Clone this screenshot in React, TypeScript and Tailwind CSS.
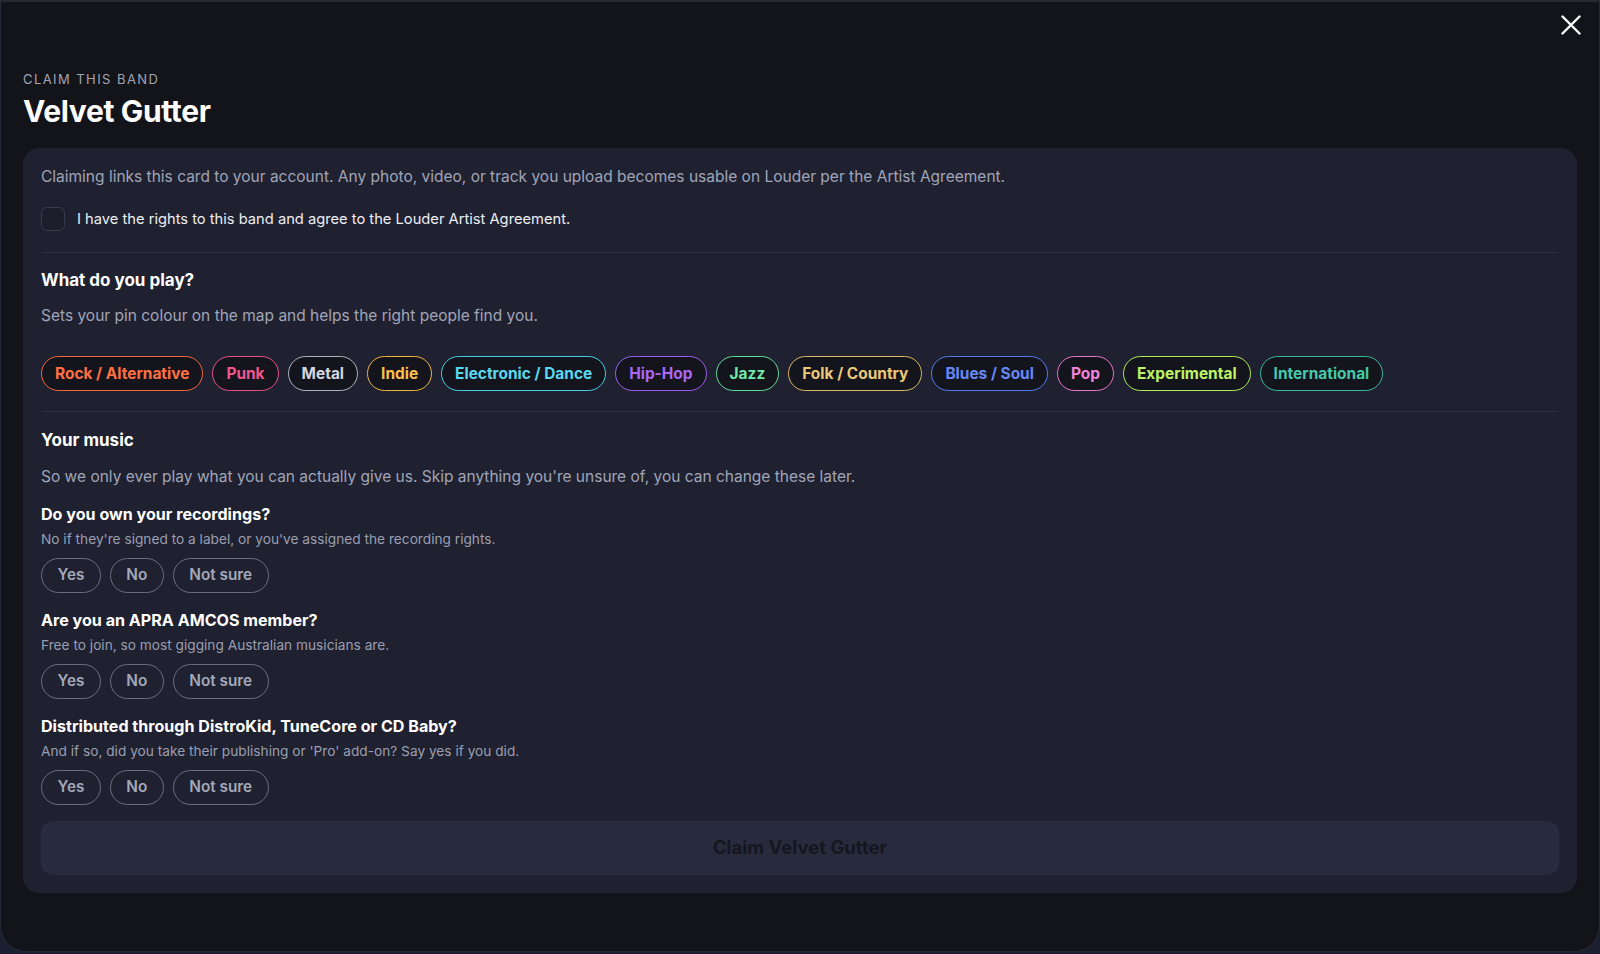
import { useState } from "react";

type Genre = { label: string; color: string };

const GENRES: Genre[] = [
  { label: "Rock / Alternative", color: "border-[#f2683c] text-[#ff6f40]" },
  { label: "Punk", color: "border-[#e9508a] text-[#f3558f]" },
  { label: "Metal", color: "border-[#aeb2bf] text-[#d4d7e0]" },
  { label: "Indie", color: "border-[#f0b443] text-[#fbbf4a]" },
  { label: "Electronic / Dance", color: "border-[#48cde6] text-[#5ad8ef]" },
  { label: "Hip-Hop", color: "border-[#9d5cf0] text-[#ab68f7]" },
  { label: "Jazz", color: "border-[#63dc98] text-[#72e8a6]" },
  { label: "Folk / Country", color: "border-[#dcb766] text-[#ebc877]" },
  { label: "Blues / Soul", color: "border-[#557cf0] text-[#6688f6]" },
  { label: "Pop", color: "border-[#e775cc] text-[#f283d8]" },
  { label: "Experimental", color: "border-[#aeeb57] text-[#bdf566]" },
  { label: "International", color: "border-[#37b99c] text-[#45c9aa]" },
];

const QUESTIONS = [
  {
    title: "Do you own your recordings?",
    hint: "No if they're signed to a label, or you've assigned the recording rights.",
  },
  {
    title: "Are you an APRA AMCOS member?",
    hint: "Free to join, so most gigging Australian musicians are.",
  },
  {
    title: "Distributed through DistroKid, TuneCore or CD Baby?",
    hint: "And if so, did you take their publishing or 'Pro' add-on? Say yes if you did.",
  },
];

function AnswerButtons() {
  return (
    <div className="mt-[10px] flex gap-[9px]">
      {["Yes", "No", "Not sure"].map((a) => (
        <button
          key={a}
          type="button"
          className="h-[35px] rounded-full border-[1.5px] border-[#696d80] px-[15.5px] text-[15.3px] font-semibold text-[#a4a8b9]"
        >
          {a}
        </button>
      ))}
    </div>
  );
}

export default function App() {
  const [agreed, setAgreed] = useState(false);

  return (
    <div
      className="h-[954px] w-full overflow-hidden bg-[#1a2030]"
      style={{ fontFamily: "Inter, 'Noto Sans', sans-serif" }}
    >
      <div className="relative h-[952px] rounded-b-[26px] border border-t-[2px] border-[#262833] bg-[#131419] px-[22px] pt-[68px]">
        {/* close */}
        <button type="button" aria-label="Close" className="absolute right-[18px] top-[13px] p-0 text-white">
          <svg width="20" height="20" viewBox="0 0 20 20" fill="none">
            <path d="M1.5 1.5 L18.5 18.5 M18.5 1.5 L1.5 18.5" stroke="currentColor" strokeWidth="2.4" strokeLinecap="round" />
          </svg>
        </button>

        <p className="text-[13px] leading-[18px] uppercase tracking-[0.11em] text-[#a1a4b4]">Claim this band</p>
        <h1 className="mt-[5px] text-[30px] font-bold leading-[36px] tracking-[-0.012em] text-white">Velvet Gutter</h1>

        <div className="mt-[19px] rounded-2xl bg-[#1f2130] px-[18px] pt-[17px] pb-[18px]">
          <p className="text-[15.5px] leading-[24px] text-[#a1a5b8]">
            Claiming links this card to your account. Any photo, video, or track you upload becomes usable on Louder per the Artist Agreement.
          </p>
          <label className="mt-[18px] flex cursor-pointer items-center gap-[12px]">
            <button
              type="button"
              onClick={() => setAgreed(!agreed)}
              className={`h-[24px] w-[24px] rounded-[6px] border-[1.5px] border-[#383b4e] ${agreed ? "bg-[#3b3f57]" : "bg-[#1c1e2c]"}`}
            />
            <span className="text-[14.7px] leading-[22px] text-[#eceef3]">
              I have the rights to this band and agree to the Louder Artist Agreement.
            </span>
          </label>

          <div className="mt-[21px] h-px bg-[#2c2f41]" />

          <h2 className="mt-[15px] text-[17px] font-bold leading-[24px] text-white">What do you play?</h2>
          <p className="mt-[12px] text-[15.5px] leading-[24px] text-[#a1a5b8]">
            Sets your pin colour on the map and helps the right people find you.
          </p>
          <div className="mt-[28px] flex flex-wrap gap-[9px]">
            {GENRES.map((g) => (
              <button
                key={g.label}
                type="button"
                className={`h-[35px] rounded-full border-[1.5px] bg-[#13141c] px-[13px] text-[15.45px] font-bold ${g.color}`}
              >
                {g.label}
              </button>
            ))}
          </div>

          <div className="mt-[20px] h-px bg-[#2c2f41]" />

          <h2 className="mt-[16px] text-[17px] font-bold leading-[24px] text-white">Your music</h2>
          <p className="mt-[13px] text-[15.5px] leading-[24px] text-[#a1a5b8]">
            So we only ever play what you can actually give us. Skip anything you're unsure of, you can change these later.
          </p>

          <div className="mt-[15px] flex flex-col gap-[17px]">
            {QUESTIONS.map((q) => (
              <div key={q.title}>
                <h3 className="text-[16.1px] font-bold leading-[20px] text-white">{q.title}</h3>
                <p className="mt-[6px] text-[13.7px] leading-[18px] text-[#9a9eb0]">{q.hint}</p>
                <AnswerButtons />
              </div>
            ))}
          </div>

          <button
            type="button"
            disabled
            className="mt-[16px] h-[54px] w-full rounded-xl bg-[#282b3e] text-[18.5px] font-bold text-[#15161e]"
          >
            Claim Velvet Gutter
          </button>
        </div>
      </div>
    </div>
  );
}
